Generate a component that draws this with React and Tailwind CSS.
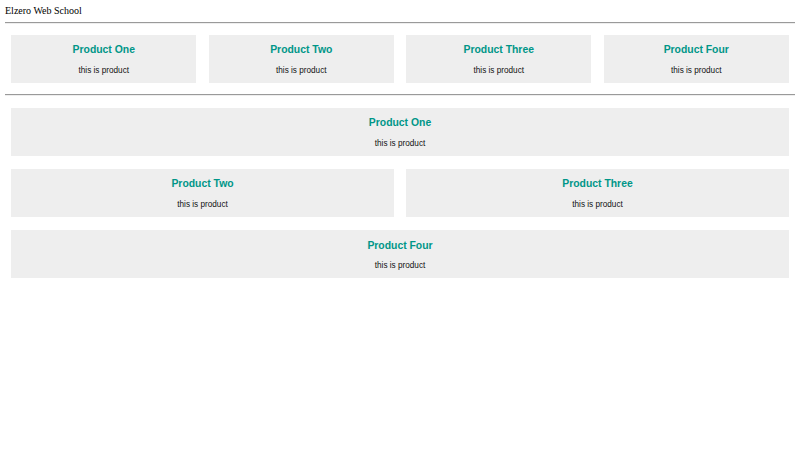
const TOP = ["Product One", "Product Two", "Product Three", "Product Four"];

function Card({ title, className = "" }) {
  return (
    <div className={`bg-[#eeeeee] flex flex-col items-center pt-[9.5px] pb-[7.6px] ${className}`}>
      <h3 className="text-[10.4px] leading-[12px] font-bold text-[#009688]">{title}</h3>
      <p className="mt-[9.7px] text-[8.2px] leading-[9.5px] text-[#111]">this is product</p>
    </div>
  );
}

function Rule() {
  return <div className="my-[5px] h-[2px] border-t border-b border-t-[#9a9a9a] border-b-[#eeeeee]"></div>;
}

export default function App() {
  return (
    <div className="min-h-[450px] bg-white p-[5px] font-['Liberation_Sans',Arial,sans-serif]">
      <div className="font-['Liberation_Serif','Times_New_Roman',serif] text-[10px] leading-[11.5px] text-black">
        Elzero Web School
      </div>
      <Rule />
      <div className="grid grid-cols-4 gap-[12.5px] p-[6.25px]">
        {TOP.map(t => (
          <Card key={t} title={t} />
        ))}
      </div>
      <Rule />
      <div className="grid grid-cols-2 gap-x-[12.5px] gap-y-[13px] p-[6.25px]">
        <Card title="Product One" className="col-span-2" />
        <Card title="Product Two" />
        <Card title="Product Three" />
        <Card title="Product Four" className="col-span-2" />
      </div>
    </div>
  );
}
